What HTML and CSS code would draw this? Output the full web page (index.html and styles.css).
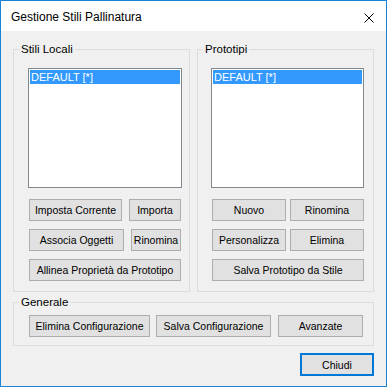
FILE: index.html
```html
<!DOCTYPE html>
<html lang="it">
<head>
<meta charset="UTF-8">
<title>Gestione Stili Pallinatura</title>
<link rel="stylesheet" href="styles.css">
</head>
<body>

<div class="window">
  <div class="titlebar">
    <span class="title">Gestione Stili Pallinatura</span>
    <svg class="close" width="10" height="10" viewBox="0 0 10 10">
      <path d="M0.5 0.5 L9.5 9.5 M9.5 0.5 L0.5 9.5" stroke="#000" stroke-width="1" fill="none"/>
    </svg>
  </div>

  <div class="content">
    <div class="groups">
      <fieldset class="group">
        <legend>Stili Locali</legend>
        <div class="group-body left-body">
          <div class="listbox">
            <div class="item selected">DEFAULT [*]</div>
          </div>
          <div class="btn-row">
            <button class="w93">Imposta Corrente</button>
            <button class="w52">Importa</button>
          </div>
          <div class="btn-row">
            <button class="w95">Associa Oggetti</button>
            <button class="w50">Rinomina</button>
          </div>
          <div class="btn-row">
            <button class="w152">Allinea Proprietà da Prototipo</button>
          </div>
        </div>
      </fieldset>

      <fieldset class="group">
        <legend>Prototipi</legend>
        <div class="group-body right-body">
          <div class="listbox">
            <div class="item selected">DEFAULT [*]</div>
          </div>
          <div class="btn-row">
            <button class="w74">Nuovo</button>
            <button class="w74">Rinomina</button>
          </div>
          <div class="btn-row">
            <button class="w74">Personalizza</button>
            <button class="w74">Elimina</button>
          </div>
          <div class="btn-row">
            <button class="w152">Salva Prototipo da Stile</button>
          </div>
        </div>
      </fieldset>
    </div>

    <fieldset class="group general">
      <legend>Generale</legend>
      <div class="general-body">
        <button class="w121">Elimina Configurazione</button>
        <button class="w115">Salva Configurazione</button>
        <button class="w85">Avanzate</button>
      </div>
    </fieldset>

    <div class="footer">
      <button class="default-btn">Chiudi</button>
    </div>
  </div>
</div>

</body>
</html>
```

FILE: styles.css
```css
body {
  margin: 0;
  padding: 0;
  font-family: "Liberation Sans", Arial, sans-serif;
  font-size: 11px;
  color: #000;
}

.window {
  width: 387px;
  height: 387px;
  box-sizing: border-box;
  border: 1px solid #1883d7;
  background-color: #f0f0f0;
  display: flex;
  flex-direction: column;
}

.titlebar {
  height: 30px;
  background-color: #fff;
  display: flex;
  align-items: center;
  justify-content: space-between;
  padding: 0 12px 0 10px;
}

.title {
  font-size: 12px;
  padding-top: 1px;
}

.close {
  display: block;
  margin-top: 3px;
}

.content {
  padding: 11px 12px 0 12px;
}

.groups {
  display: flex;
  gap: 7px;
}

.group {
  margin: 0;
  padding: 0;
  border: 1px solid #dcdcdc;
  width: 177px;
  box-sizing: border-box;
  min-width: 0;
}

.group legend {
  margin-left: 5px;
  padding: 0 2px;
  line-height: 14px;
  font-size: 11.5px;
}

.group-body {
  padding: 12px 0 10px 0;
}

.left-body {
  padding-left: 14px;
}

.right-body {
  padding-left: 13px;
}

.listbox {
  width: 154px;
  height: 120px;
  box-sizing: border-box;
  border: 1px solid #828790;
  background-color: #fff;
  padding: 1px;
  margin-bottom: 11px;
}

.right-body .listbox {
  width: 153px;
}

.item {
  height: 14px;
  line-height: 14px;
  padding-left: 1px;
  font-size: 11px;
}

.item.selected {
  background-color: #3399ff;
  color: #fff;
}

.btn-row {
  display: flex;
  justify-content: space-between;
  width: 152px;
  margin-left: 1px;
  margin-bottom: 8px;
}

.btn-row:last-child {
  margin-bottom: 0;
}

button {
  font-family: "Liberation Sans", Arial, sans-serif;
  font-size: 10.5px;
  color: #000;
  height: 22px;
  padding: 0;
  box-sizing: border-box;
  background-color: #e1e1e1;
  border: 1px solid #adadad;
  white-space: nowrap;
}

.w50 { width: 50px; }
.w52 { width: 52px; }
.w74 { width: 74px; }
.w85 { width: 85px; }
.w93 { width: 93px; }
.w95 { width: 95px; }
.w115 { width: 115px; }
.w121 { width: 121px; }
.w152 { width: 152px; }

.general {
  width: 361px;
  margin-top: 3px;
}

.general-body {
  display: flex;
  gap: 6px;
  padding: 6px 0 8px 15px;
}

.general-body .w85 {
  margin-left: 1px;
}

.footer {
  display: flex;
  justify-content: flex-end;
  margin-top: 7px;
}

.default-btn {
  width: 74px;
  height: 23px;
  border: 2px solid #0078d7;
}
```
